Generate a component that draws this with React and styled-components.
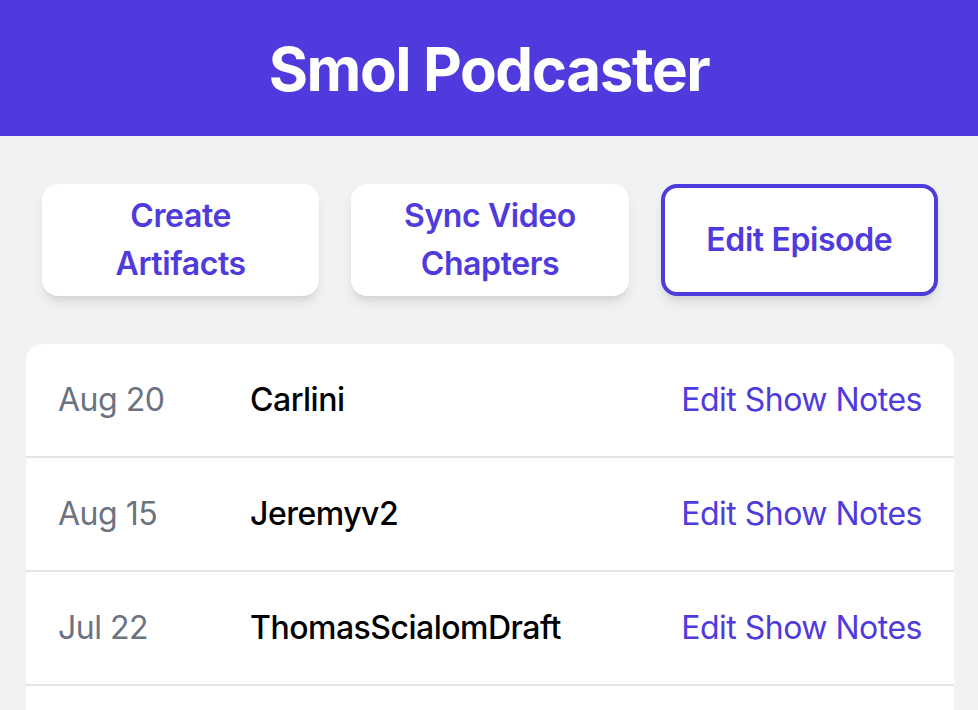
import React from "react";
import styled, { createGlobalStyle } from "styled-components";

const GlobalStyle = createGlobalStyle`
  html, body {
    margin: 0;
    padding: 0;
    background: #f1f2f4;
    font-family: Inter, "Noto Sans", "Liberation Sans", sans-serif;
  }
`;

const purple = "#4f3bdd";

const Header = styled.header`
  height: 136px;
  background: ${purple};
  display: flex;
  align-items: center;
  justify-content: center;
  h1 {
    margin: 0;
    padding-top: 2px;
    color: white;
    font-size: 60px;
    line-height: 72px;
    font-weight: 700;
    letter-spacing: -1.4px;
  }
`;

const Main = styled.main`
  padding: 48px 24px 0 26px;
`;

const ButtonRow = styled.div`
  display: grid;
  grid-template-columns: repeat(3, 1fr);
  gap: 32px;
  padding: 0 16px;
  margin-bottom: 48px;
`;

const ActionButton = styled.button`
  height: 112px;
  padding: 8px 16px;
  background: white;
  border: ${(p) => (p.active ? `4px solid ${purple}` : "none")};
  border-radius: 16px;
  box-shadow: 0 8px 12px -2px rgba(0, 0, 0, 0.1), 0 4px 6px -4px rgba(0, 0, 0, 0.1);
  color: ${purple};
  font-family: inherit;
  font-size: 32px;
  line-height: 48px;
  font-weight: 600;
  letter-spacing: -0.4px;
  text-align: center;
`;

const Card = styled.div`
  background: white;
  border-radius: 16px 16px 0 0;
  overflow: hidden;
`;

const Row = styled.div`
  display: flex;
  align-items: center;
  padding: 32px 32px;
  font-size: 32px;
  line-height: 48px;
  letter-spacing: -0.5px;
  border-bottom: 2px solid #e4e5e9;
  .date {
    width: 160px;
    margin-right: 32px;
    color: #6b7280;
  }
  .title {
    flex: 1;
    color: #000;
    font-weight: 500;
  }
  .link {
    color: ${purple};
    text-decoration: none;
  }
`;

const episodes = [
  { date: "Aug 20", title: "Carlini" },
  { date: "Aug 15", title: "Jeremyv2" },
  { date: "Jul 22", title: "ThomasScialomDraft" },
  { date: "Jul 15", title: "Episode" },
];

const App = () => {
  return (
    <>
      <GlobalStyle />
      <Header>
        <h1>Smol Podcaster</h1>
      </Header>
      <Main>
        <ButtonRow>
          <ActionButton>Create<br />Artifacts</ActionButton>
          <ActionButton>Sync Video<br />Chapters</ActionButton>
          <ActionButton active>Edit Episode</ActionButton>
        </ButtonRow>
        <Card>
          {episodes.map((ep) => (
            <Row key={ep.title}>
              <div className="date">{ep.date}</div>
              <div className="title">{ep.title}</div>
              <a className="link" href="#">Edit Show Notes</a>
            </Row>
          ))}
        </Card>
      </Main>
    </>
  );
};

export default App;
